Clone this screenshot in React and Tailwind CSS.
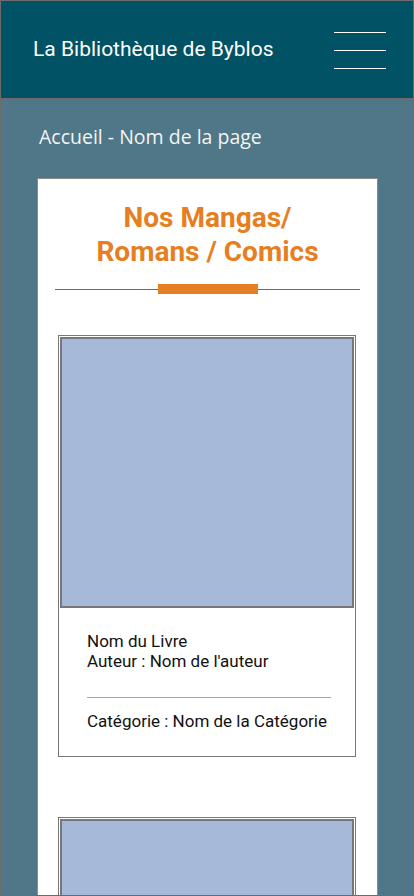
export default function App() {
  const Book = ({ withText = true }) => (
    <div className="border border-[#777777] bg-white p-[1px]">
      <div className="h-[271px] border-2 border-[#777777] bg-[#a6b9d9]" />
      {withText && (
        <div className="pl-[27px] pr-[23px] pt-[23px] pb-[24px] font-['Roboto',sans-serif] text-[17px] leading-[20px] text-[#111111]">
          <div>Nom du Livre</div>
          <div>Auteur : Nom de l'auteur</div>
          <div className="mt-[26px] mb-[13px] h-px bg-[#e4945a]" />
          <div>Catégorie : Nom de la Catégorie</div>
        </div>
      )}
    </div>
  );

  return (
    <div className="h-[896px] overflow-hidden border border-[#6b6b6b] bg-[#4f7787]">
      <header className="flex h-[98px] items-center justify-between border-b border-[#6b6b6b] bg-[#005264] pl-[32px] pr-[27px]">
        <div className="font-['Roboto',sans-serif] text-[21px] text-white">La Bibliothèque de Byblos</div>
        <div className="flex w-[52px] flex-col gap-[17px] pt-[2px]">
          <div className="h-px bg-white" />
          <div className="h-px bg-white" />
          <div className="h-px bg-white" />
        </div>
      </header>
      <div className="pl-[38px] pt-[25px] font-['Open_Sans',sans-serif] text-[19.5px] leading-[26px] text-[#f4f4f4]">
        Accueil - Nom de la page
      </div>
      <main className="ml-[36px] mr-[35px] mt-[28px] border border-[#8e8a86] bg-white pt-[22px] pb-[60px]">
        <h1 className="text-center font-['Roboto',sans-serif] text-[28px] font-bold leading-[34px] text-[#e67e22]">
          Nos Mangas/
          <br />
          Romans / Comics
        </h1>
        <div className="ml-[17px] mr-[17px] mt-[15px] flex items-center">
          <div className="h-px flex-1 bg-[#6b6b6b]" />
          <div className="h-[10px] w-[100px] bg-[#e67e22]" />
          <div className="h-px flex-1 bg-[#6b6b6b]" />
        </div>
        <div className="ml-[20px] mr-[21px] mt-[41px] flex flex-col gap-[60px]">
          <Book />
          <Book withText={false} />
        </div>
      </main>
    </div>
  );
}
